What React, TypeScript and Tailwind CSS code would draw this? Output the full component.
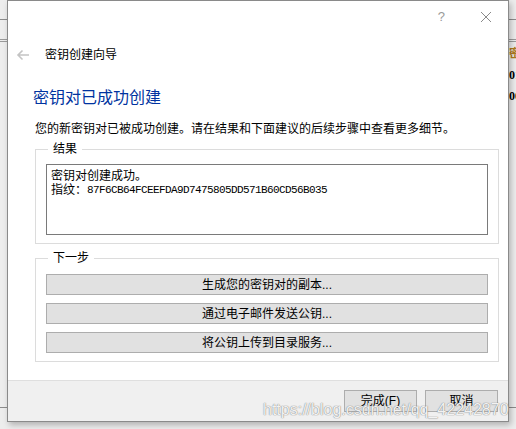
import React from "react";

const cjk = "font-['Liberation_Sans','Noto_Sans_CJK_SC',sans-serif]";

function GroupBox({ label, children, className }: { label: string; children: React.ReactNode; className?: string }) {
  return (
    <fieldset className={`ml-[27px] mr-[9px] border border-[#dcdcdc] px-[10px] pb-[8px] ${className ?? ""}`}>
      <legend className="ml-[2px] px-[5px] text-[12px] leading-[14px] text-black">{label}</legend>
      {children}
    </fieldset>
  );
}

function WinButton({ children, className }: { children: React.ReactNode; className?: string }) {
  return (
    <button className={`flex items-center justify-center border border-[#adadad] bg-[#e1e1e1] text-[12px] leading-none text-black ${className ?? ""}`}>
      {children}
    </button>
  );
}

export default function App() {
  return (
    <div className={`relative h-[429px] w-[516px] overflow-hidden bg-[#ededed] ${cjk}`}>
      {/* background window behind the dialog */}
      <div className="absolute inset-x-0 top-[19px] h-px bg-[#8c8c8c]" />
      <div className="absolute inset-x-0 top-[39px] h-px bg-[#9a9a9a]" />
      <div className="absolute inset-x-0 top-[41px] h-px bg-[#9a9a9a]" />
      <div className="absolute inset-x-0 top-[407px] h-px bg-[#8c8c8c]" />
      <div className="absolute left-[509px] top-[46px] flex flex-col gap-[5px] text-[12px] font-bold leading-[16px] text-black">
        <span className="text-[#b07a20]">密</span>
        <span className="font-['Liberation_Serif',serif]">01</span>
        <span className="font-['Liberation_Serif',serif]">00</span>
      </div>

      {/* dialog */}
      <div className="absolute left-[7px] top-0 flex h-[422px] w-[502px] flex-col border border-[#8a8a8a] bg-white shadow-[2px_3px_6px_rgba(0,0,0,0.25)]">
        <div className="flex h-[30px] items-center justify-end pr-[16px] text-[#9a9a9a]">
          <span className="mr-[35px] mt-[2px] text-[13px] font-['Liberation_Sans',sans-serif]">?</span>
          <svg width="12" height="12" viewBox="0 0 12 12" className="mt-[2px]">
            <path d="M1 1 L11 11 M11 1 L1 11" stroke="#8a8a8a" strokeWidth="1" />
          </svg>
        </div>

        <div className="mt-[16px] flex h-[16px] items-center">
          <svg width="14" height="12" viewBox="0 0 14 12" className="ml-[8px]">
            <path d="M13 6 H2 M6.5 1.5 L2 6 L6.5 10.5" stroke="#c4c4c4" strokeWidth="1.6" fill="none" />
          </svg>
          <span className="ml-[15px] text-[12px] text-black">密钥创建向导</span>
        </div>

        <h1 className="ml-[25px] mt-[25px] text-[16px] leading-[20px] text-[#0033a0]">密钥对已成功创建</h1>

        <p className="ml-[27px] mt-[13px] text-[12px] leading-[16px] text-black">
          您的新密钥对已被成功创建。请在结果和下面建议的后续步骤中查看更多细节。
        </p>

        <GroupBox label="结果" className="mt-[5px]">
          <div className="mt-[8px] h-[71px] border border-[#7a7a7a] px-[4px] pt-[4px] text-[12px] leading-[14px] text-black">
            <div>密钥对创建成功。</div>
            <div className="flex">
              <span>指纹：</span>
              <span className="font-['Liberation_Mono',monospace] text-[11px] tracking-[-0.6px]">
                87F6CB64FCEEFDA9D7475805DD571B60CD56B035
              </span>
            </div>
          </div>
        </GroupBox>

        <GroupBox label="下一步" className="mt-[7px]">
          <div className="mt-[9px] flex flex-col gap-[8px]">
            <WinButton className="h-[21px]">生成您的密钥对的副本...</WinButton>
            <WinButton className="h-[21px]">通过电子邮件发送公钥...</WinButton>
            <WinButton className="h-[21px]">将公钥上传到目录服务...</WinButton>
          </div>
        </GroupBox>

        <div className="mt-auto flex h-[41px] items-start justify-end gap-[8px] border-t border-[#dfdfdf] bg-[#f0f0f0] pr-[10px] pt-[9px]">
          <WinButton className="h-[22px] w-[73px]">完成(F)</WinButton>
          <WinButton className="h-[22px] w-[73px]">取消</WinButton>
        </div>
      </div>

      {/* watermark */}
      <div className="absolute left-[263px] top-[400px] text-[16px] leading-[20px] text-white/90 font-['Liberation_Sans',sans-serif] [text-shadow:0_0_1px_rgba(100,100,100,0.8),0_0_1px_rgba(100,100,100,0.6)]">
        https://blog.csdn.net/qq_42242870
      </div>
    </div>
  );
}
